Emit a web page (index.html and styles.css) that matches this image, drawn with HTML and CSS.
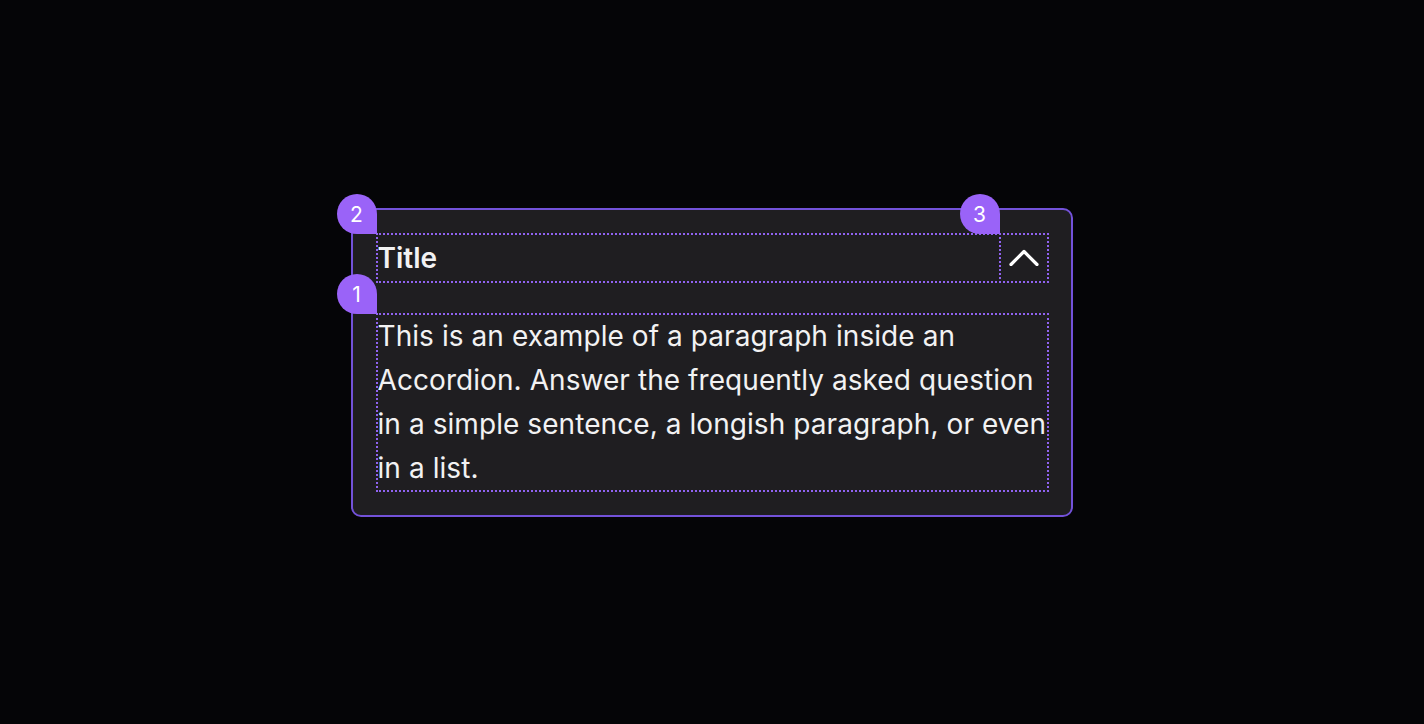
FILE: index.html
```html
<!DOCTYPE html>
<html lang="en">
<head>
<meta charset="utf-8">
<title>Accordion</title>
<link rel="stylesheet" href="styles.css">
</head>
<body>
<main class="stage">
  <section class="accordion">
    <div class="header">
      <span class="badge badge-2">2</span>
      <div class="title">Title</div>
      <button class="toggle" aria-label="Collapse">
        <span class="badge badge-3">3</span>
        <svg width="30" height="17" viewBox="0 0 30 17" fill="none">
          <path d="M2 15.5 L15 2.5 L28 15.5" stroke="#ffffff" stroke-width="3.2" stroke-linecap="round" stroke-linejoin="round"/>
        </svg>
      </button>
    </div>
    <div class="content">
      <span class="badge badge-1">1</span>
      <p>This is an example of a paragraph inside an Accordion. Answer the frequently asked question in a simple sentence, a longish paragraph, or even in a list.</p>
    </div>
  </section>
</main>
</body>
</html>
```
FILE: styles.css
```css
html, body {
  margin: 0;
  padding: 0;
  background: #050507;
}
body {
  font-family: Inter, "Noto Sans", sans-serif;
  color: #f2f2f3;
}
.stage {
  width: 1424px;
  height: 724px;
  display: flex;
  justify-content: center;
  align-items: flex-start;
  padding-top: 208px;
  box-sizing: border-box;
}
.accordion {
  width: 722px;
  box-sizing: border-box;
  margin-left: -1px;
  border: 2px solid #7352d9;
  border-radius: 10px;
  background: #1f1e21;
  padding: 23px 22px 23px 23px;
  display: flex;
  flex-direction: column;
  gap: 30px;
}
.header {
  position: relative;
  height: 50px;
  box-sizing: border-box;
  border: 2px dotted #9063f0;
  display: flex;
  align-items: center;
}
.title {
  flex: 1;
  font-size: 28px;
  font-weight: 600;
  letter-spacing: 0;
}
.toggle {
  position: relative;
  width: 50px;
  height: 50px;
  margin: -2px -2px -2px 0;
  box-sizing: border-box;
  border: 2px dotted #9063f0;
  background: transparent;
  padding: 0;
  display: flex;
  align-items: center;
  justify-content: center;
  cursor: pointer;
}
.toggle svg {
  display: block;
  margin-top: -2px;
}
.content {
  position: relative;
  border: 2px dotted #9063f0;
}
.content p {
  margin: -1px 0 0;
  font-size: 28px;
  line-height: 44px;
  font-weight: 400;
  letter-spacing: 0.07px;
  color: #f2f2f3;
}
.badge {
  position: absolute;
  width: 40px;
  height: 40px;
  border-radius: 50% 50% 0 50%;
  background: #9a63f8;
  color: #ffffff;
  font-family: Inter, "Noto Sans", sans-serif;
  font-size: 21px;
  font-weight: 400;
  display: flex;
  align-items: center;
  justify-content: center;
  line-height: 1;
}
.badge-2,
.badge-1,
.badge-3 {
  left: -41px;
  top: -41px;
}
```
